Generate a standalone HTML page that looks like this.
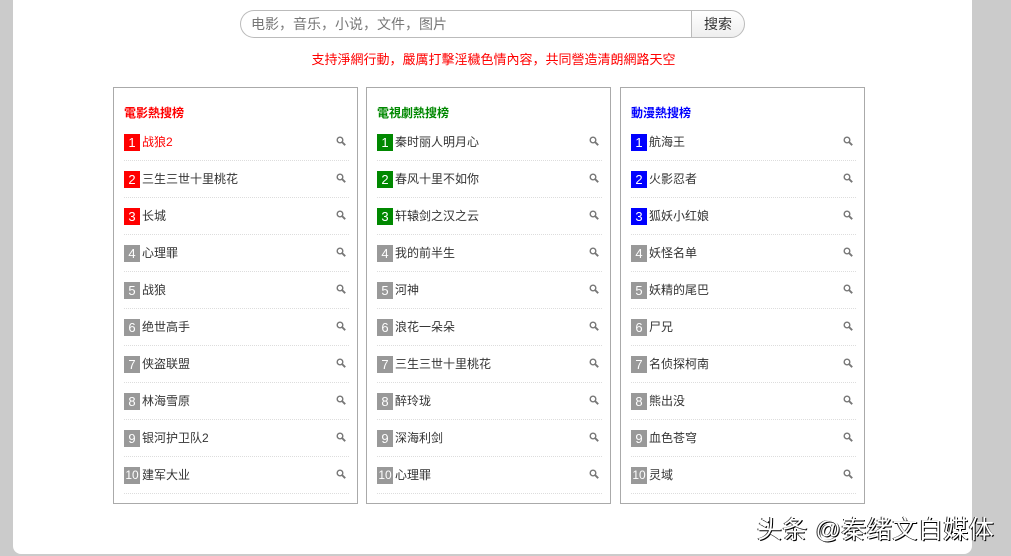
<!DOCTYPE html>
<html><head><meta charset="utf-8"><style>
body{margin:0;width:1011px;height:556px;background:#cbcbcb;font-family:"Liberation Sans","Noto Sans CJK SC",sans-serif;position:relative;overflow:hidden}
.panel{position:absolute;left:13px;top:-10px;width:959px;height:564px;background:#fff;border-radius:8px}
.search{position:absolute;left:240px;top:10px;height:26px;border:1px solid #bbb;border-right:none;border-radius:14px 0 0 14px;font-size:14px;color:#777;line-height:26px;padding-left:10px;box-sizing:border-box;width:452px;height:28px}
.btn{position:absolute;left:691px;top:10px;width:54px;border:1px solid #bbb;border-radius:0 14px 14px 0;background:linear-gradient(#fff,#eee);font-size:14px;color:#333;text-align:center;line-height:26px;box-sizing:border-box;height:28px}
.notice{position:absolute;left:-12px;width:1011px;top:49px;text-align:center;color:#f00;font-size:13px}
.box{position:absolute;top:87px;width:245px;height:417px;border:1px solid #aaa;box-sizing:border-box}
.box h3{margin:0;position:absolute;left:10px;top:16px;font-size:12px;font-weight:bold}
.row{position:absolute;left:10px;width:225px;height:36px;border-bottom:1px dotted #ddd;font-size:12px;color:#333}
.n{position:absolute;left:0;top:10px;width:16px;height:17px;line-height:17px;text-align:center;color:#fff;font-size:13px;background:#999}
.t{position:absolute;left:18px;top:9px;line-height:19px}
.ic{position:absolute;right:3px;top:12px;width:10px;height:10px}
.wm{position:absolute;left:757px;top:510px;font-size:25px;color:#fff;text-shadow:1px 1px 0 #000,-1px 0 0 #333;letter-spacing:0.5px}
</style></head><body>
<div class="panel"></div>
<div class="search">电影，音乐，小说，文件，图片</div>
<div class="btn">搜索</div>
<div class="notice">支持淨網行動，嚴厲打擊淫穢色情內容，共同營造清朗網路天空</div>
<div id="c"></div>
<div class="wm">头条 @秦绪文自媒体</div>
<script>
var data=[[113,'#f00','電影熱搜榜',['战狼2','三生三世十里桃花','长城','心理罪','战狼','绝世高手','侠盗联盟','林海雪原','银河护卫队2','建军大业']],
[366,'#080','電視劇熱搜榜',['秦时丽人明月心','春风十里不如你','轩辕剑之汉之云','我的前半生','河神','浪花一朵朵','三生三世十里桃花','醉玲珑','深海利剑','心理罪']],
[620,'#00f','動漫熱搜榜',['航海王','火影忍者','狐妖小红娘','妖怪名单','妖精的尾巴','尸兄','名侦探柯南','熊出没','血色苍穹','灵域']]];
var h='';
data.forEach(function(d,bi){h+='<div class="box" style="left:'+d[0]+'px"><h3 style="color:'+d[1]+'">'+d[2]+'</h3>';
d[3].forEach(function(s,i){var top=i<3;h+='<div class="row" style="top:'+(36+i*37)+'px"><span class="n" style="'+(top?'background:'+d[1]:'')+(i==9?';font-size:12px':'')+'">'+(i+1)+'</span><span class="t" style="'+(bi==0&&i==0?'color:#f00':'')+'">'+s+'</span><svg class="ic" viewBox="0 0 10 10"><circle cx="4" cy="4" r="2.8" fill="none" stroke="#777" stroke-width="1.4"/><path d="M6 6L9.2 9.2" stroke="#777" stroke-width="1.9"/></svg></div>';});
h+='</div>';});
document.getElementById('c').innerHTML=h;
</script>
</body></html>
